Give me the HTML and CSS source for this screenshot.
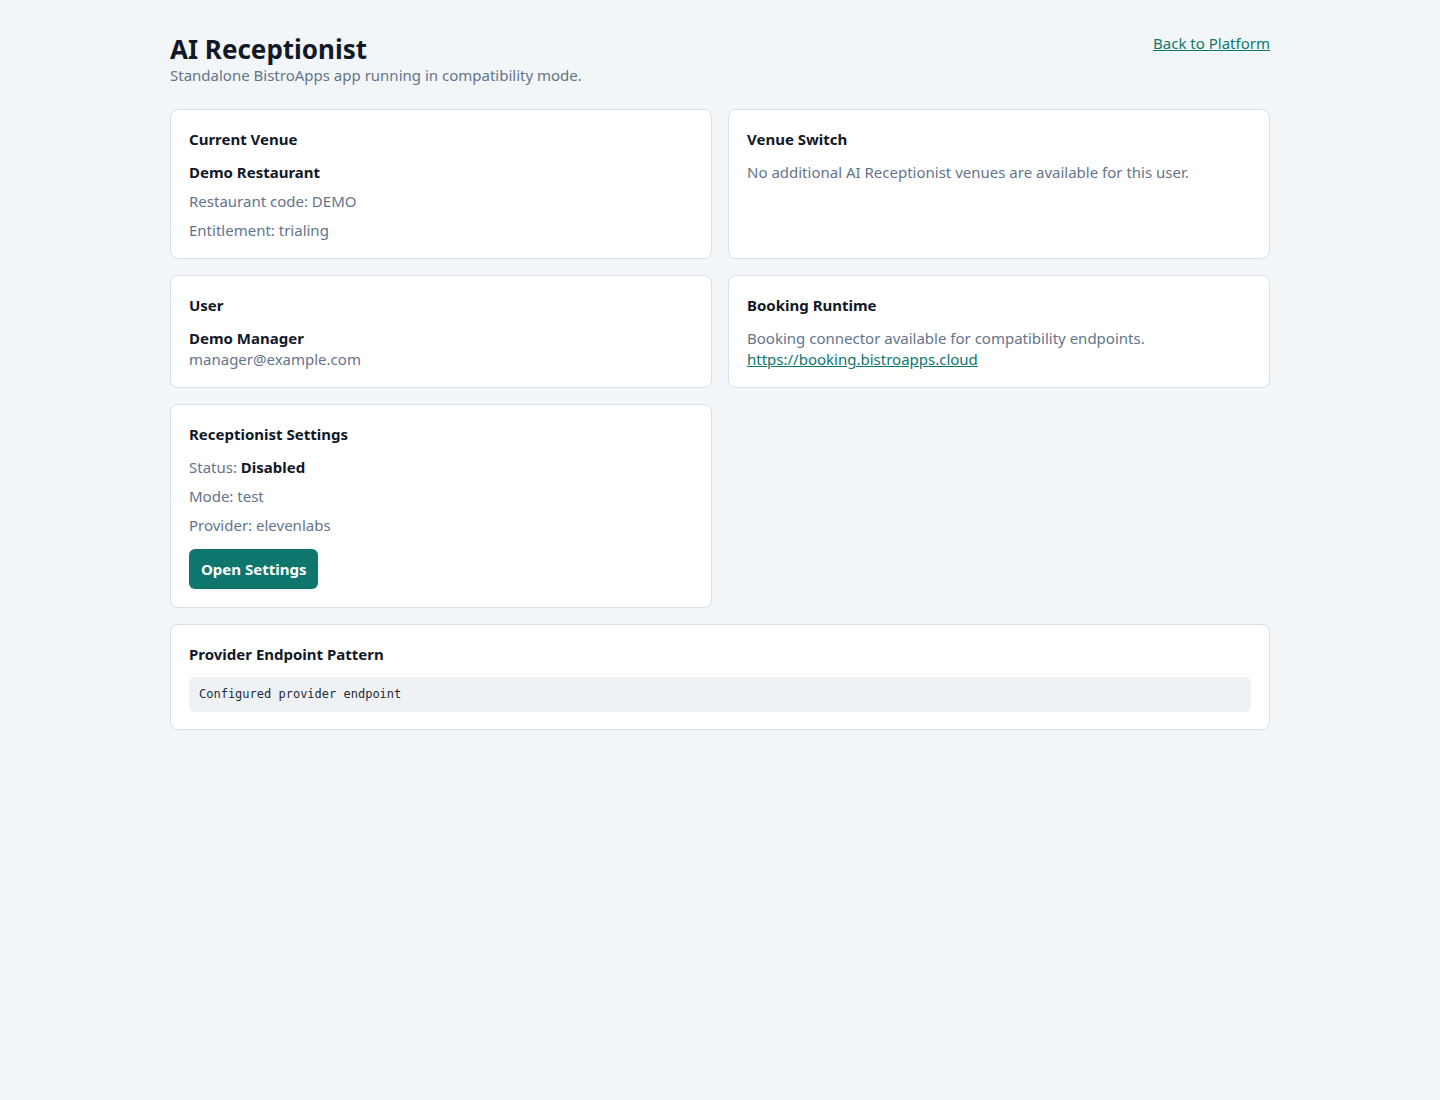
FILE: index.html
```html
<!DOCTYPE html>
<html lang="en">
<head>
  <meta charset="UTF-8">
  <meta name="viewport" content="width=device-width, initial-scale=1.0">
  <title>AI Receptionist</title>
  <link rel="stylesheet" href="styles.css">
</head>
<body>
  <div class="page">
    <header class="page-header">
      <div>
        <h1 class="page-title">AI Receptionist</h1>
        <p class="page-sub">Standalone BistroApps app running in compatibility mode.</p>
      </div>
      <a class="back-link" href="#">Back to Platform</a>
    </header>

    <div class="card-grid">
      <section class="card">
        <h2 class="card-title">Current Venue</h2>
        <p class="strong">Demo Restaurant</p>
        <p class="muted">Restaurant code: DEMO</p>
        <p class="muted">Entitlement: trialing</p>
      </section>

      <section class="card">
        <h2 class="card-title">Venue Switch</h2>
        <p class="muted">No additional AI Receptionist venues are available for this user.</p>
      </section>

      <section class="card">
        <h2 class="card-title">User</h2>
        <div class="stack">
          <div class="strong">Demo Manager</div>
          <div class="muted">manager@example.com</div>
        </div>
      </section>

      <section class="card">
        <h2 class="card-title">Booking Runtime</h2>
        <div class="stack">
          <div class="muted">Booking connector available for compatibility endpoints.</div>
          <a class="link" href="#">https://booking.bistroapps.cloud</a>
        </div>
      </section>

      <section class="card">
        <h2 class="card-title">Receptionist Settings</h2>
        <p class="muted">Status: <strong class="dark">Disabled</strong></p>
        <p class="muted">Mode: test</p>
        <p class="muted">Provider: elevenlabs</p>
        <button class="btn">Open Settings</button>
      </section>

      <section class="card wide">
        <h2 class="card-title">Provider Endpoint Pattern</h2>
        <pre class="code">Configured provider endpoint</pre>
      </section>
    </div>
  </div>
</body>
</html>
```

FILE: styles.css
```css
*, *::before, *::after {
  box-sizing: border-box;
}

body {
  margin: 0;
  background: #f3f6f9;
  color: #111827;
  font-family: "Noto Sans", "Open Sans", sans-serif;
  font-size: 15px;
  line-height: 21px;
}

.page {
  width: 1100px;
  margin: 0 auto;
  padding-top: 33px;
}

.page-header {
  display: flex;
  justify-content: space-between;
  align-items: flex-start;
  margin-bottom: 23px;
}

.page-title {
  margin: 0;
  font-size: 26px;
  line-height: 32px;
  font-weight: 700;
  color: #111827;
}

.page-sub {
  margin: 0;
  color: #64748b;
}

.back-link {
  color: #0f766e;
  text-decoration: underline;
}

.card-grid {
  display: grid;
  grid-template-columns: 1fr 1fr;
  gap: 16px;
  align-items: stretch;
}

.card {
  background: #fff;
  border: 1px solid #d9e0e7;
  border-radius: 8px;
  padding: 19px 18px 17px;
}

.card.wide {
  grid-column: 1 / -1;
}

.card-title {
  margin: 0 0 12px;
  font-size: 15px;
  line-height: 21px;
  font-weight: 700;
}

.card p {
  margin: 0 0 8px;
}

.card p:last-child {
  margin-bottom: 0;
}

.strong,
.dark {
  font-weight: 700;
  color: #111827;
}

.muted {
  color: #64748b;
}

.stack {
  display: flex;
  flex-direction: column;
  align-items: flex-start;
}

.link {
  color: #0f766e;
  text-decoration: underline;
}

.btn {
  display: block;
  margin: 13px 0 1px;
  height: 40px;
  padding: 0 12px;
  border: 0;
  border-radius: 6px;
  background: #0f766e;
  color: #fff;
  font-family: inherit;
  font-size: 15px;
  font-weight: 700;
}

.code {
  margin: 0;
  padding: 9px 10px;
  background: #eef2f5;
  border-radius: 6px;
  font-family: "DejaVu Sans Mono", monospace;
  font-size: 12px;
  line-height: 17px;
  color: #1f2937;
}
```
